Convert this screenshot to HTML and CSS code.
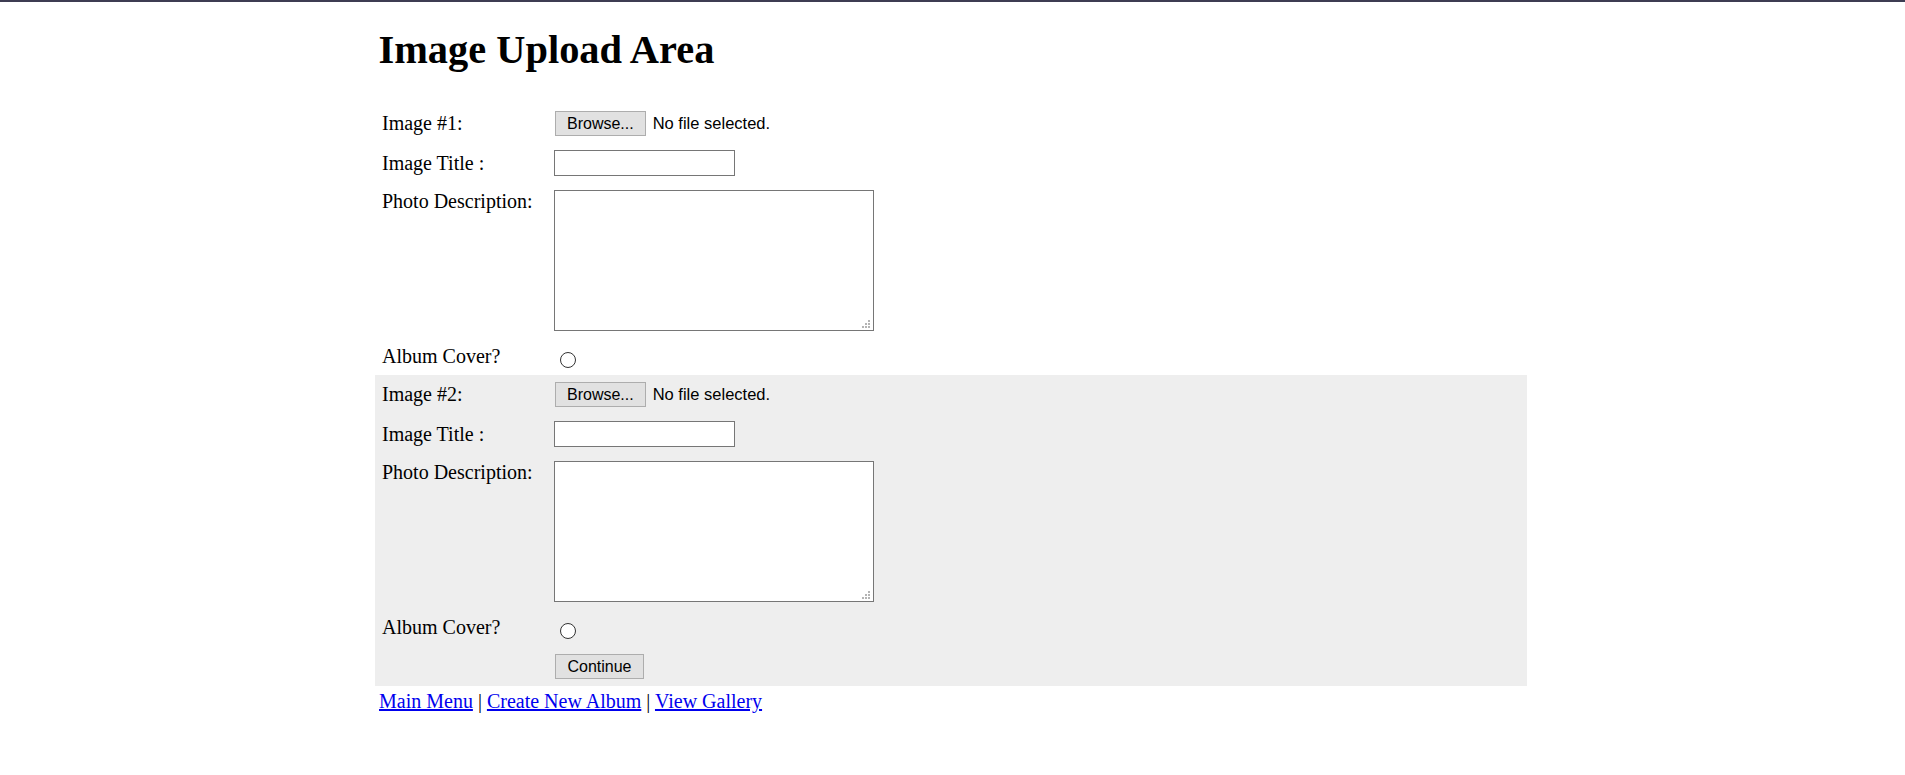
FILE: index.html
```html
<!DOCTYPE html>
<html lang="en">
<head>
<meta charset="utf-8">
<title>Image Upload Area</title>
<link rel="stylesheet" href="styles.css">
</head>
<body>
<div class="page">
  <h1 class="title">Image Upload Area</h1>
  <form class="upload">
    <section class="entry">
      <div class="row row-mid">
        <span class="label">Image #1:</span>
        <span class="file"><button type="button" class="btn">Browse...</button><span class="file-status">No file selected.</span></span>
      </div>
      <div class="row row-mid">
        <span class="label">Image Title :</span>
        <span><input type="text" class="text-input"></span>
      </div>
      <div class="row">
        <span class="label">Photo Description:</span>
        <span class="area-wrap"><textarea class="area"></textarea><span class="grip"><i></i><i></i><i></i><i></i><i></i><i></i></span></span>
      </div>
      <div class="row">
        <span class="label">Album Cover?</span>
        <span><input type="radio" name="cover" class="radio"></span>
      </div>
    </section>
    <section class="entry alt">
      <div class="row row-mid">
        <span class="label">Image #2:</span>
        <span class="file"><button type="button" class="btn">Browse...</button><span class="file-status">No file selected.</span></span>
      </div>
      <div class="row row-mid">
        <span class="label">Image Title :</span>
        <span><input type="text" class="text-input"></span>
      </div>
      <div class="row">
        <span class="label">Photo Description:</span>
        <span class="area-wrap"><textarea class="area"></textarea><span class="grip"><i></i><i></i><i></i><i></i><i></i><i></i></span></span>
      </div>
      <div class="row">
        <span class="label">Album Cover?</span>
        <span><input type="radio" name="cover" class="radio"></span>
      </div>
      <div class="row row-submit">
        <span class="label"></span>
        <span><button type="submit" class="btn btn-continue">Continue</button></span>
      </div>
    </section>
  </form>
  <nav class="links"><a href="#">Main Menu</a> | <a href="#">Create New Album</a> | <a href="#">View Gallery</a></nav>
</div>
</body>
</html>
```
FILE: styles.css
```css
html {
  border-top: 2px solid #3d3c52;
  background: #fff;
}
body {
  margin: 0;
  padding-right: 3px;
  font-family: "Liberation Serif", "Times New Roman", serif;
  font-size: 20px;
  color: #000;
}
.page {
  width: 1152px;
  margin: 0 auto;
}
.title {
  font-size: 40.4px;
  font-weight: bold;
  line-height: 46px;
  margin: 25px 0 27px;
  padding-left: 3.5px;
}
.upload {
  padding-top: 4px;
}
.entry.alt {
  background: #eeeeee;
}
.row {
  display: grid;
  grid-template-columns: 172px 1fr;
  align-items: start;
  padding: 7px 0 7px 7px;
  line-height: 23px;
}
.row-mid {
  align-items: center;
}
.row-submit {
  padding-top: 8px;
}
.label {
  white-space: nowrap;
}
.file {
  display: flex;
  align-items: center;
  gap: 7px;
}
.btn {
  box-sizing: border-box;
  height: 25px;
  margin: 0 0 0 1px;
  padding: 0 11px;
  border: 1px solid #adadad;
  background: #e1e1e1;
  font-family: "Liberation Sans", Arial, sans-serif;
  font-size: 16px;
  color: #000;
  line-height: 23px;
  border-radius: 0;
}
.btn-continue {
  width: 89px;
  padding: 0;
}
.file-status {
  font-family: "Liberation Sans", Arial, sans-serif;
  font-size: 16.5px;
  line-height: 23px;
}
.text-input {
  box-sizing: border-box;
  display: block;
  width: 181px;
  height: 26px;
  margin: 0;
  border: 1px solid #767676;
  border-radius: 0;
  background: #fff;
  padding: 1px 3px;
  font-family: "Liberation Sans", Arial, sans-serif;
  font-size: 16px;
}
.area-wrap {
  position: relative;
  display: block;
  width: 320px;
  height: 141px;
}
.area {
  box-sizing: border-box;
  display: block;
  width: 320px;
  height: 141px;
  margin: 0;
  border: 1px solid #767676;
  border-radius: 0;
  background: #fff;
  resize: none;
  padding: 2px;
  font-family: "Liberation Mono", monospace;
  font-size: 16px;
}
.grip {
  position: absolute;
  right: 4px;
  bottom: 3px;
  width: 8px;
  height: 8px;
  display: grid;
  grid-template-columns: repeat(3, 2px);
  grid-template-rows: repeat(3, 2px);
  gap: 1px;
}
.grip i {
  display: block;
  background: #b4b4b4;
}
.grip i:nth-child(1) { grid-column: 3; grid-row: 1; }
.grip i:nth-child(2) { grid-column: 2; grid-row: 2; }
.grip i:nth-child(3) { grid-column: 3; grid-row: 2; }
.grip i:nth-child(4) { grid-column: 1; grid-row: 3; }
.grip i:nth-child(5) { grid-column: 2; grid-row: 3; }
.grip i:nth-child(6) { grid-column: 3; grid-row: 3; }
.radio {
  appearance: none;
  -webkit-appearance: none;
  box-sizing: border-box;
  display: block;
  width: 16px;
  height: 16px;
  margin: 7px 0 0 6px;
  border: 1px solid #333;
  border-radius: 50%;
  background: #fff;
}
.links {
  margin-top: 4px;
  padding-left: 4px;
  line-height: 23px;
}
.links a {
  color: #0000ee;
  text-decoration: underline;
}
```
